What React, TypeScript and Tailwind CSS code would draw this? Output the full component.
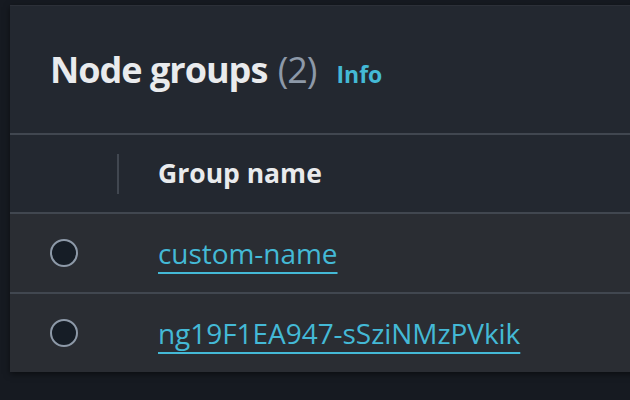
import React from "react";

const rows = ["custom-name", "ng19F1EA947-sSziNMzPVkik"];

function Radio() {
  return (
    <span className="block h-[28px] w-[28px] rounded-full border-2 border-[#8d99a8] bg-[#161d26]" />
  );
}

export default function App() {
  return (
    <div
      className="h-[400px] w-[630px] overflow-hidden bg-[#161a21] pl-[10px] pt-[5px]"
      style={{ fontFamily: '"Open Sans", "Noto Sans", sans-serif' }}
    >
      <div className="w-[640px] border-t border-[#2c3038] bg-[#232830] shadow-[0_2px_6px_rgba(0,0,0,0.5)]">
        <div className="flex h-[127px] items-baseline pl-[40px] pt-[46px]">
          <h2 className="text-[36px] font-bold leading-none tracking-[-1px] text-[#e9ebed]">
            Node groups <span className="ml-[2px] font-normal text-[#8d99a8]">(2)</span>
          </h2>
          <span className="ml-[20px] text-[23px] font-bold leading-none text-[#44b9d6]">
            Info
          </span>
        </div>
        <div className="h-[2px] bg-[#414750]" />
        <div className="flex h-[77px] items-center">
          <div className="flex w-[148px] items-center">
            <div className="ml-[107px] h-[40px] w-[2px] bg-[#414750]" />
          </div>
          <span className="text-[26.5px] font-bold leading-none text-[#e9ebed]">Group name</span>
        </div>
        {rows.map((name) => (
          <div key={name}>
            <div className="h-[2px] bg-[#414750]" />
            <div className="flex h-[78px] items-center bg-[#2a2d33]">
              <div className="flex w-[148px] items-center pl-[40px]">
                <Radio />
              </div>
              <span className="text-[28px] leading-none tracking-[-0.05px] text-[#44b9d6] underline decoration-2 underline-offset-[8px]">
                {name}
              </span>
            </div>
          </div>
        ))}
      </div>
    </div>
  );
}
